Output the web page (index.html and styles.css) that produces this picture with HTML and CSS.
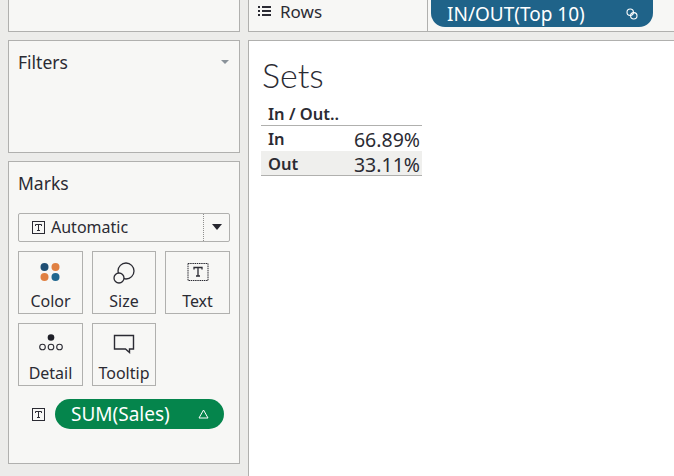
FILE: index.html
```html
<!DOCTYPE html>
<html lang="en">

<head>
  <meta charset="utf-8" />
  <title>Sets</title>
  <link rel="stylesheet" href="styles.css">
</head>

<body>
  <div class="sidebar">
    <div class="panel pagesPanel"></div>

    <div class="panel filtersPanel">
      <span class="panelTitle">Filters</span>
      <svg class="filtersArrow" width="8" height="5" viewBox="0 0 8 5"><path d="M0 0h8L4 4z" fill="#8a9299"/></svg>
    </div>

    <div class="panel marksPanel">
      <div class="panelTitle">Marks</div>

      <div class="markType">
        <svg class="tIcon" width="13" height="13" viewBox="0 0 13 13"><rect x=".5" y=".5" width="12" height="12" fill="none" stroke="#2b2b33"/><path d="M3.500 5v-1.500h6v1.500M6.500 3.500v6M5 9.500h3" fill="none" stroke="#2b2b33"/></svg>
        <span class="markTypeName">Automatic</span>
        <span class="markTypeArrow"><svg width="12" height="7" viewBox="0 0 12 7"><path d="M1 0h10L6 6z" fill="#26262e"/></svg></span>
      </div>

      <div class="markCards">
        <div class="markCard">
          <svg width="22" height="20" viewBox="0 0 22 20">
            <circle cx="4.500" cy="5" r="4" fill="#1f4e73"/>
            <circle cx="15.500" cy="5" r="4" fill="#e08042"/>
            <circle cx="4.500" cy="15" r="4" fill="#e08042"/>
            <circle cx="15.500" cy="15" r="4" fill="#20678f"/>
          </svg>
          <span>Color</span>
        </div>
        <div class="markCard">
          <svg width="22" height="22" viewBox="0 0 22 22" fill="none" stroke="#2b2b33" stroke-width="1.300">
            <circle cx="13" cy="9" r="8"/>
            <circle cx="6" cy="16" r="5" fill="#f7f7f5"/>
          </svg>
          <span>Size</span>
        </div>
        <div class="markCard">
          <svg width="22" height="20" viewBox="0 0 22 20" fill="none" stroke="#2b2b33">
            <rect x="1" y="1.500" width="20" height="17" stroke-dasharray="1.500 .7"/>
            <path d="M7 7.500v-2h8v2M11 5.500v8.500M9 14h4" stroke-width="1.300"/>
          </svg>
          <span>Text</span>
        </div>
        <div class="markCard">
          <svg width="24" height="17" viewBox="0 0 24 17" fill="none" stroke="#2b2b33" stroke-width="1.100">
            <circle cx="12" cy="3.500" r="3.300" fill="#1f2028" stroke="none"/>
            <circle cx="3.500" cy="13" r="2.800"/>
            <circle cx="12" cy="13" r="2.800"/>
            <circle cx="20.500" cy="13" r="2.800"/>
          </svg>
          <span>Detail</span>
        </div>
        <div class="markCard">
          <svg width="22" height="20" viewBox="0 0 22 20" fill="none" stroke="#2b2b33" stroke-width="1.400">
            <path d="M1.500 1.500h19v13.500h-4v3.500l-4-3.500h-11z"/>
          </svg>
          <span>Tooltip</span>
        </div>
      </div>

      <div class="markPillRow">
        <svg class="tIcon" width="13" height="13" viewBox="0 0 13 13"><rect x=".5" y=".5" width="12" height="12" fill="none" stroke="#2b2b33"/><path d="M3.500 5v-1.500h6v1.500M6.500 3.500v6M5 9.500h3" fill="none" stroke="#2b2b33"/></svg>
        <div class="pill greenPill">
          <span>SUM(Sales)</span>
          <svg width="11" height="10" viewBox="0 0 11 10"><path d="M5.500 1L10 9H1z" fill="none" stroke="#fff"/></svg>
        </div>
      </div>
    </div>
  </div>

  <div class="main">
    <div class="panel rowsShelf">
      <div class="shelfLabel">
        <svg width="13" height="10" viewBox="0 0 13 10" fill="#2b2b33">
          <rect x="0" y="0" width="2" height="2"/><rect x="4" y="0" width="9" height="2"/>
          <rect x="0" y="4" width="2" height="2"/><rect x="4" y="4" width="9" height="2"/>
          <rect x="0" y="8" width="2" height="2"/><rect x="4" y="8" width="9" height="2"/>
        </svg>
        <span>Rows</span>
      </div>
      <div class="shelfBody">
        <div class="pill bluePill">
          <span>IN/OUT(Top 10)</span>
          <svg width="12" height="12" viewBox="0 0 12 12" fill="none" stroke="#fff" stroke-width="1.100">
            <circle cx="4.200" cy="4.200" r="3.200"/>
            <circle cx="7.800" cy="7.800" r="3.200"/>
          </svg>
        </div>
      </div>
    </div>

    <div class="view">
      <h1 class="viewTitle">Sets</h1>
      <table class="setsTable">
        <thead>
          <tr><th>In / Out..</th><th></th></tr>
        </thead>
        <tbody>
          <tr class="plainRow"><th>In</th><td>66.89%</td></tr>
          <tr class="stripe"><th>Out</th><td>33.11%</td></tr>
        </tbody>
      </table>
    </div>
  </div>
</body>

</html>
```

FILE: styles.css
```css
/*
  colors:
    page        #ececea
    panel       #f7f7f5
    border      #b0b0ae
    text        #2b2b33
 */
html, body {
  margin: 0;
  height: 476px;
  overflow: hidden;
}

body {
  display: flex;
  gap: 8px;
  padding-left: 8px;
  background-color: #ececea;
  color: #2b2b33;
  font-family: "Noto Sans", sans-serif;
  font-size: 16px;
}

.sidebar {
  width: 232px;
  display: flex;
  flex-direction: column;
  gap: 8px;
}

.main {
  flex: 1;
  display: flex;
  flex-direction: column;
  gap: 8px;
}

.panel {
  box-sizing: border-box;
  background-color: #f7f7f5;
  border: 1px solid #b0b0ae;
}

.pagesPanel {
  height: 32px;
  border-top: none;
}

.filtersPanel {
  height: 113px;
  padding: 10px 9px;
  display: flex;
  justify-content: space-between;
  align-items: flex-start;
}

.filtersArrow {
  margin-top: 9px;
  margin-right: 1px;
}

.panelTitle {
  font-size: 17.500px;
  line-height: 22px;
}

.marksPanel {
  height: 303px;
  padding: 10px 9px;
}

.markType {
  box-sizing: border-box;
  height: 29px;
  margin-top: 19px;
  display: flex;
  align-items: center;
  padding-left: 13px;
  border: 1px solid #b0b0ae;
  border-radius: 2px;
}

.markTypeName {
  margin-left: 6px;
  margin-bottom: 2px;
  flex: 1;
}

.markTypeArrow {
  width: 25px;
  height: 27px;
  display: flex;
  align-items: center;
  justify-content: center;
  border-left: 1px dotted #8f8f8d;
}

.markCards {
  display: grid;
  grid-template-columns: 65px 64px 65px;
  grid-auto-rows: 63px;
  column-gap: 9px;
  row-gap: 9px;
  margin-top: 9px;
}

.markCard {
  box-sizing: border-box;
  display: flex;
  flex-direction: column;
  align-items: center;
  justify-content: space-between;
  padding: 10px 0 1px;
  border: 1px solid #b0b0ae;
}

.markPillRow {
  display: flex;
  align-items: center;
  gap: 10px;
  margin-top: 13px;
  padding-left: 14px;
}

.pill {
  box-sizing: border-box;
  display: flex;
  align-items: center;
  justify-content: space-between;
  color: #fff;
  font-size: 19px;
}

.greenPill {
  width: 169px;
  height: 30px;
  padding: 0 15px 0 16px;
  border-radius: 15px;
  background-color: #05854c;
}

.rowsShelf {
  height: 32px;
  display: flex;
  border-top: none;
  border-right: none;
}

.shelfLabel {
  width: 179px;
  display: flex;
  align-items: center;
  gap: 9px;
  padding: 0 0 9px 9px;
  border-right: 1px solid #b0b0ae;
  box-sizing: border-box;
  font-size: 17px;
}

.shelfBody {
  flex: 1;
  padding-left: 3px;
}

.bluePill {
  width: 222px;
  height: 27px;
  padding: 0 15px 0 16px;
  border-radius: 0 0 14px 14px;
  background-color: #1f6389;
}

.view {
  flex: 1;
  box-sizing: border-box;
  padding-left: 12px;
  background-color: #fff;
  border-top: 1px solid #b0b0ae;
  border-left: 1px solid #b0b0ae;
}

.viewTitle {
  margin: 15px 0 0 1px;
  font-family: "Lato", sans-serif;
  font-weight: 300;
  font-size: 34px;
  line-height: 38px;
}

.setsTable {
  width: 161px;
  margin-top: 10px;
  border-collapse: collapse;
  font-size: 19.500px;
}

.setsTable th {
  padding: 0 0 0 7px;
  text-align: left;
  font-size: 16.500px;
  font-weight: 600;
  line-height: 20px;
  vertical-align: top;
}

.setsTable td {
  padding: 4px 2px 0 0;
  text-align: right;
  line-height: 20px;
  vertical-align: top;
}

.setsTable thead tr {
  border-bottom: 1px solid #b0b0ae;
}

.setsTable thead th {
  padding-bottom: 1px;
}

.setsTable tbody th {
  padding-top: 3px;
}

.plainRow {
  height: 25px;
}

.stripe {
  height: 24px;
  background-color: #efefed;
  border-bottom: 1px solid #b0b0ae;
}
```
